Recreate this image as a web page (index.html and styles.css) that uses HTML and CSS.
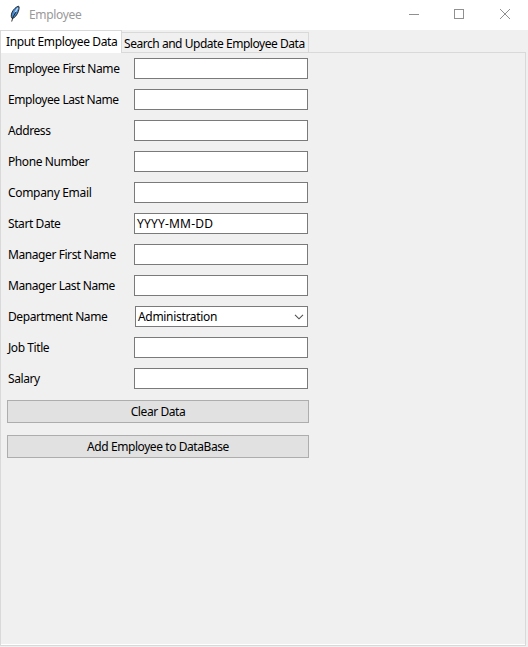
FILE: index.html
```html
<!DOCTYPE html>
<html lang="en">
<head>
<meta charset="utf-8">
<title>Employee</title>
<link rel="stylesheet" href="styles.css">
</head>
<body>
<header class="titlebar">
  <svg class="feather" width="12" height="18" viewBox="0 0 12 18">
    <path d="M9.6 1.2 C7.5 1.5 4 4.5 2.8 8 C1.9 10.8 2.2 12.5 3.2 13.5 C5.8 13 8.3 9.5 9.3 6.5 C10.2 4 10.4 2 9.6 1.2Z" fill="#4a8fd6" stroke="#20262e" stroke-width="1"/>
    <path d="M8.8 2.8 L6 7.5" stroke="#b9d9f5" stroke-width="1.3"/>
    <path d="M7 7 L4 12 L2.7 16.5" fill="none" stroke="#1b1b1b" stroke-width=".9"/>
  </svg>
  <span class="title">Employee</span>
  <svg class="controls" width="102" height="12" viewBox="0 0 102 12" fill="none" stroke="#909090">
    <path d="M0 6.5H10M45.5 1.5H54.5V10.5H45.5Z" shape-rendering="crispEdges"/>
    <path d="M91 1L101 11M101 1L91 11"/>
  </svg>
</header>
<nav class="tabs">
  <div class="tab active"><span>Input Employee Data</span></div>
  <div class="tab"><span>Search and Update Employee Data</span></div>
</nav>
<main class="pane">
  <form class="form">
    <label>Employee First Name</label><div class="field"></div>
    <label>Employee Last Name</label><div class="field"></div>
    <label>Address</label><div class="field"></div>
    <label>Phone Number</label><div class="field"></div>
    <label class="loose">Company Email</label><div class="field"></div>
    <label>Start Date</label><div class="field date">YYYY-MM-DD</div>
    <label>Manager First Name</label><div class="field"></div>
    <label>Manager Last Name</label><div class="field"></div>
    <label>Department Name</label>
    <div class="field select"><span class="loose">Administration</span>
      <svg width="10" height="6" viewBox="0 0 10 6"><path d="M1 .8L5 4.8L9 .8" fill="none" stroke="#505050" stroke-width="1.1"/></svg>
    </div>
    <label>Job Title</label><div class="field"></div>
    <label>Salary</label><div class="field"></div>
  </form>
  <div class="actions">
    <button type="button">Clear Data</button>
    <button type="button">Add Employee to DataBase</button>
  </div>
</main>
</body>
</html>
```
FILE: styles.css
```css
* { box-sizing: border-box; }
body {
  margin: 0;
  width: 528px;
  height: 647px;
  overflow: hidden;
  background: #f0f0f0;
  color: #000;
  font: 12px/16px "Noto Sans", sans-serif;
  letter-spacing: -0.42px;
  white-space: nowrap;
}
svg { display: block; }
.titlebar {
  display: flex;
  height: 30px;
  padding: 0 17px 2px 9px;
  align-items: center;
  background: #fff;
  color: #999;
}
.title { margin: 2px 0 0 8px; letter-spacing: -0.32px; }
.controls { margin-left: auto; }
.tabs { display: flex; height: 22px; align-items: flex-end; }
.tab {
  width: 187px;
  height: 20px;
  padding: 3px 0 0 2px;
  border: 1px solid #d9d9d9;
  border-width: 1px 1px 0 0;
}
.tab.active {
  position: relative;
  width: 122px;
  height: 23px;
  margin-bottom: -1px;
  padding: 3px 0 0 5px;
  border-left-width: 1px;
  background: #fff;
}
.tab:not(.active) { letter-spacing: -0.46px; }
.tab.active { letter-spacing: -0.37px; }
.pane {
  width: 526px;
  height: 594px;
  padding: 5px 6px 0;
  border: 1px solid #d9d9d9;
  box-shadow: inset 0 -1px #fff;
}
.form {
  display: grid;
  grid-template-columns: 126px 174px;
  grid-auto-rows: 21px;
  row-gap: 10px;
  padding-left: 1px;
}
label { line-height: 21px; }
.loose { letter-spacing: -0.32px; }
.field {
  display: flex;
  align-items: center;
  border: 1px solid #7a7a7a;
  background: #fff;
}
.date { padding-left: 2px; letter-spacing: 0.2px; }
.select {
  justify-content: space-between;
  margin-left: 1px;
  padding: 0 3px 0 2px;
}
.actions { display: grid; gap: 12px; width: 302px; margin-top: 11px; }
button {
  height: 23px;
  padding: 0;
  border: 1px solid #adadad;
  background: #e1e1e1;
  color: inherit;
  font: inherit;
  letter-spacing: inherit;
}
```
